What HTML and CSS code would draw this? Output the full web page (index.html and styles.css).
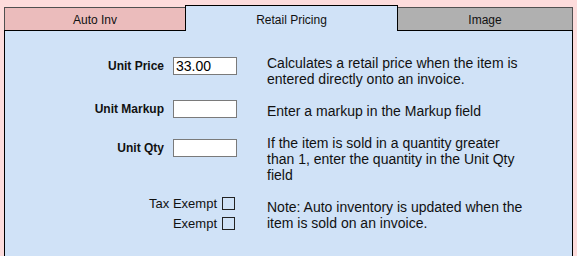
FILE: index.html
```html
<!doctype html>
<html lang="en">
    <head>
        <meta charset="utf-8">
        <title>Retail Pricing</title>
        <link rel="stylesheet" href="styles.css">
    </head>
    <body>
        <div class="tabBar">
            <div class="tab autoInv">Auto Inv</div>
            <div class="tab active">Retail Pricing</div>
            <div class="tab image">Image</div>
        </div>

        <div class="panel">
            <div class="fields">
                <div class="field">
                    <label for="unitPrice">Unit Price</label>
                    <input type="text" id="unitPrice" value="33.00">
                </div>
                <div class="field markupRow">
                    <label for="unitMarkup">Unit Markup</label>
                    <input type="text" id="unitMarkup">
                </div>
                <div class="field qtyRow">
                    <label for="unitQty">Unit Qty</label>
                    <input type="text" id="unitQty">
                </div>
                <div class="check taxRow">
                    <label for="taxExempt">Tax Exempt</label>
                    <input type="checkbox" id="taxExempt">
                </div>
                <div class="check exemptRow">
                    <label for="exempt">Exempt</label>
                    <input type="checkbox" id="exempt">
                </div>
            </div>

            <div class="notes">
                <p>Calculates a retail price when the item is entered directly onto an invoice.</p>
                <p>Enter a markup in the Markup field</p>
                <p>If the item is sold in a quantity greater than 1, enter the quantity in the Unit Qty field</p>
                <p>Note: Auto inventory is updated when the item is sold on an invoice.</p>
            </div>
        </div>
    </body>
</html>
```

FILE: styles.css
```css
body {
    margin: 0;
    background-color: #fddcdc;
    font-family: "Liberation Sans", Arial, sans-serif;
    color: #111;
    overflow: hidden;
}

.tabBar {
    display: flex;
    align-items: flex-end;
    margin: 5px 4px 0 4px;
}

.tab {
    box-sizing: border-box;
    height: 23px;
    padding-top: 2px;
    border: 1px solid #505050;
    border-bottom: 0;
    font-size: 12px;
    line-height: 20px;
    text-align: center;
}

.autoInv {
    width: 181px;
    border-right: 0;
    background-color: #ebbcbc;
}

.active {
    position: relative;
    z-index: 1;
    width: 213px;
    height: 26px;
    margin-bottom: -1px;
    padding-top: 4px;
    border-color: #000;
    background-color: #d0e2f7;
}

.image {
    width: 175px;
    border-left: 0;
    background-color: #b0b0b0;
}

.panel {
    display: flex;
    height: 225px;
    margin: 0 4px;
    border: 1px solid #000;
    border-bottom: 0;
    background-color: #d0e2f7;
}

.fields {
    width: 232px;
    padding-top: 26px;
}

.field {
    display: flex;
    justify-content: flex-end;
    align-items: center;
    gap: 9px;
    height: 18px;
}

.field label {
    font-size: 12px;
    font-weight: bold;
    line-height: 18px;
}

.field input {
    box-sizing: border-box;
    width: 64px;
    height: 18px;
    margin: 0;
    padding: 0 2px;
    border: 1px solid #7a7a7a;
    background: #fff;
    font-family: "Liberation Sans", Arial, sans-serif;
    font-size: 14px;
    color: #000;
    outline: none;
}

.markupRow {
    margin-top: 25px;
}

.qtyRow {
    margin-top: 21px;
}

.check {
    display: flex;
    justify-content: flex-end;
    align-items: center;
    gap: 5px;
    height: 13px;
    padding-right: 2px;
}

.check label {
    font-size: 13px;
    line-height: 13px;
}

.check input {
    appearance: none;
    box-sizing: border-box;
    width: 13px;
    height: 13px;
    margin: 0;
    border: 1px solid #222;
    background: transparent;
}

.taxRow {
    margin-top: 40px;
}

.exemptRow {
    margin-top: 7px;
}

.notes {
    width: 262px;
    margin-left: 30px;
    padding-top: 24px;
    font-size: 14px;
    line-height: 16px;
}

.notes p {
    margin: 0 0 16px 0;
}
```
